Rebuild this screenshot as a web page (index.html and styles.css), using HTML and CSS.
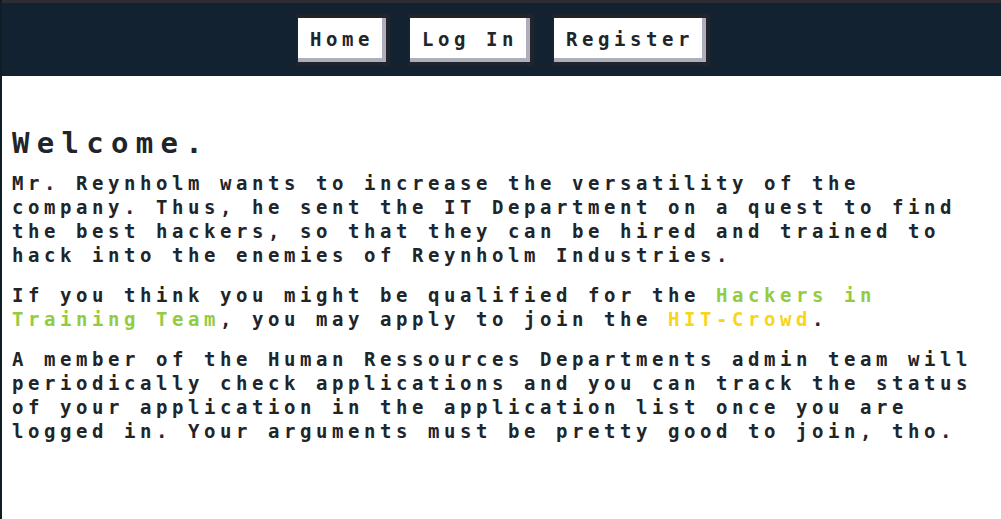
FILE: index.html
```html
<!DOCTYPE html>
<html lang="en">
<head>
<meta charset="utf-8">
<title>HIT-Crowd</title>
<link rel="stylesheet" href="styles.css">
</head>
<body>
<div class="page">
  <div class="topbar"></div>
  <nav class="nav">
    <a class="btn" href="#">Home</a>
    <a class="btn" href="#">Log In</a>
    <a class="btn" href="#">Register</a>
  </nav>
  <main class="content">
    <h1 class="title">Welcome.</h1>
    <p class="text">Mr. Reynholm wants to increase the versatility of the company. Thus, he sent the IT Department on a quest to find the best hackers, so that they can be hired and trained to hack into the enemies of Reynholm Industries.</p>
    <p class="text">If you think you might be qualified for the <span class="green">Hackers in Training Team</span>, you may apply to join the <span class="yellow">HIT-Crowd</span>.</p>
    <p class="text">A member of the Human Ressources Departments admin team will periodically check applications and you can track the status of your application in the application list once you are logged in. Your arguments must be pretty good to join, tho.</p>
  </main>
</div>
</body>
</html>
```

FILE: styles.css
```css
html, body {
  margin: 0;
  padding: 0;
  background: #ffffff;
}

body {
  font-family: "DejaVu Sans Mono", "Liberation Mono", monospace;
  font-weight: bold;
  color: #212529;
}

.page {
  min-height: 100vh;
  box-sizing: border-box;
  border-left: 2px solid #0d1f24;
}

.topbar {
  height: 3px;
  background: #2e2b33;
}

.nav {
  display: flex;
  justify-content: center;
  gap: 19px;
  background: #132230;
  padding: 11px 0 10px 4px;
}

.btn {
  display: block;
  font-size: 19px;
  letter-spacing: 4.56px;
  line-height: 24px;
  color: #212529;
  text-decoration: none;
  background: #ffffff;
  border-style: solid;
  border-color: #212529;
  border-width: 4px 4px 4px 1px;
  box-shadow: inset -4px -4px #adafbc;
  padding: 9px 12px 11px 12px;
  white-space: pre;
}

.content {
  padding: 0 10px;
}

.title {
  margin: 49px 0 10px;
  font-size: 29px;
  line-height: 36px;
  letter-spacing: 7.3px;
  font-weight: bold;
}

.text {
  margin: 0 0 16px;
  font-size: 19px;
  line-height: 24px;
  letter-spacing: 4.56px;
}

.green {
  color: #92cc41;
}

.yellow {
  color: #f7d51d;
}
```
